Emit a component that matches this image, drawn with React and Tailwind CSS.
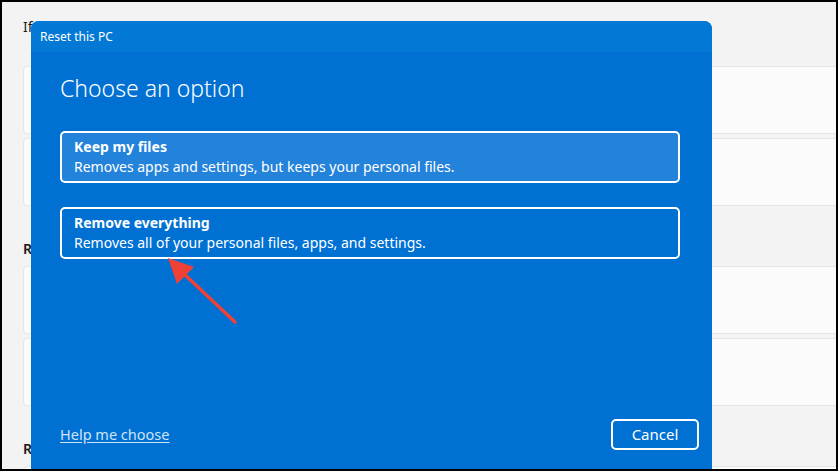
import React from 'react';

const font = { fontFamily: '"Noto Sans", "Open Sans", Arial, sans-serif' };

const SettingsCard = () => (
  <div className="h-[68px] w-[900px] rounded-[4px] border border-[#e5e5e5] bg-[#fbfbfb]" />
);

const OptionCard = ({ title, desc, highlighted }) => (
  <button
    className={`w-[620px] rounded-[5px] border-2 border-white px-3 py-1 text-left text-white ${
      highlighted ? 'bg-[#2383db]' : 'bg-transparent'
    }`}
  >
    <div className="text-[14px] font-bold leading-5">{title}</div>
    <div className="text-[14px] leading-5">{desc}</div>
  </button>
);

const App = () => {
  return (
    <div
      className="relative h-[471px] w-[838px] overflow-hidden border-2 border-black bg-[#f3f3f3]"
      style={font}
    >
      {/* Settings page behind the dialog */}
      <div className="flex flex-col pl-[21px] pt-[15px] text-[#1b1b1b]">
        <p className="text-[14px] leading-5">
          If you're having problems with your PC or want to reset it, these recovery options might help.
        </p>
        <div className="mt-[29px] flex flex-col gap-1">
          <SettingsCard />
          <SettingsCard />
        </div>
        <p className="mt-[33px] text-[14px] font-semibold leading-5">Recovery options</p>
        <div className="mt-[7px] flex flex-col gap-1">
          <SettingsCard />
          <SettingsCard />
        </div>
        <p className="mt-[33px] text-[14px] font-semibold leading-5">Related support</p>
        <div className="mt-[7px] flex flex-col gap-1">
          <SettingsCard />
        </div>
      </div>

      {/* Reset this PC dialog */}
      <div className="absolute left-[29px] top-[19px] flex h-[448px] w-[681px] flex-col overflow-hidden rounded-t-[8px] bg-[#0071d3] text-white">
        <div className="flex h-[31px] items-center bg-[#0379d5] pl-[9px] text-[12px]">
          Reset this PC
        </div>
        <div className="flex flex-1 flex-col pl-[29px] pt-5">
          <h1 className="text-[23px] font-light leading-8">Choose an option</h1>
          <div className="mt-[27px] flex flex-col gap-6">
            <OptionCard
              highlighted
              title="Keep my files"
              desc="Removes apps and settings, but keeps your personal files."
            />
            <OptionCard
              title="Remove everything"
              desc="Removes all of your personal files, apps, and settings."
            />
          </div>
        </div>
        <div className="flex items-center justify-between pb-[19px] pl-[29px] pr-[13px]">
          <a className="text-[14.5px] text-[#cfe3f6] underline underline-offset-2">Help me choose</a>
          <button className="h-[31px] w-[88px] rounded-[5px] border-2 border-white text-[15px] text-white">
            Cancel
          </button>
        </div>
      </div>

      {/* Red annotation arrow */}
      <svg className="pointer-events-none absolute" width="838" height="471" style={{ left: -2, top: -2 }}>
        <line x1="182" y1="272" x2="235" y2="322" stroke="#ef4135" strokeWidth="3.5" strokeLinecap="round" />
        <polygon points="168,258 194,267 177,284" fill="#ef4135" />
      </svg>
    </div>
  );
};

export default App;
